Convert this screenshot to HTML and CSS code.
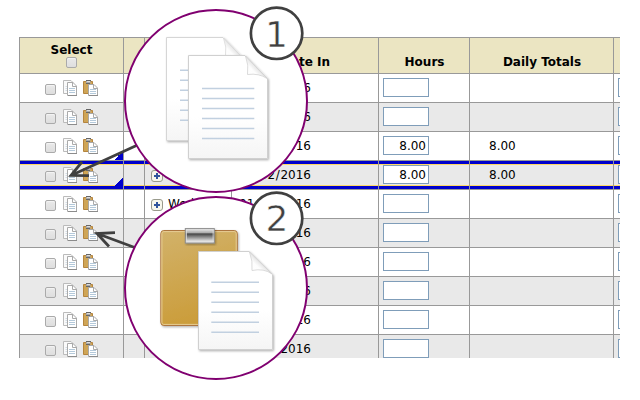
FILE: index.html
```html
<!DOCTYPE html>
<html lang="en">
<head>
<meta charset="utf-8">
<title>Timesheet</title>
<link rel="stylesheet" href="styles.css">
</head>
<body>
<svg class="defs" width="0" height="0">
  <defs>
    <linearGradient id="paper" x1="0" y1="0" x2="0" y2="1"><stop offset="0" stop-color="#fff"/><stop offset=".6" stop-color="#fff"/><stop offset="1" stop-color="#f5f5f5"/></linearGradient>
    <linearGradient id="board" x1="0" y1="0" x2=".25" y2="1"><stop offset="0" stop-color="#d2b26a"/><stop offset="1" stop-color="#cb9d3b"/></linearGradient>
    <linearGradient id="clip" x1="0" y1="0" x2="0" y2="1"><stop offset="0" stop-color="#eee"/><stop offset=".3" stop-color="#a8a8a8"/><stop offset=".36" stop-color="#444"/><stop offset=".9" stop-color="#eee"/><stop offset="1" stop-color="#bbb"/></linearGradient>
    <linearGradient id="fold" x1="0" y1="1" x2="1" y2="0"><stop offset="0" stop-color="#fff"/><stop offset=".35" stop-color="#fdfdfd"/><stop offset=".5" stop-color="#e6e6e6"/></linearGradient>
    <filter id="shadow" x="-10%" y="-10%" width="125%" height="125%"><feDropShadow dx="1" dy="1.2" stdDeviation="1.1" flood-color="#000" flood-opacity=".3"/></filter>
  </defs>
  <symbol id="copy" viewBox="0 0 15 17">
    <path d="M.5.5H8L10.500 3V13.500H.5Z" fill="#fafafa" stroke="#bbb"/>
    <path d="M2.500 6.500H5M2.500 8.500H5M2.500 10.500H5" stroke="#d3dde6"/>
    <path d="M4.500 2.500H10L13.500 6V15.500H4.500Z" fill="#fff" stroke="#aaa"/>
    <path d="M9.500 2.500V6.500H13.500" fill="none" stroke="#aaa"/>
    <path d="M5 15.500H14" stroke="#8c8c8c"/>
    <path d="M6 8.500H12M6 10.500H12M6 12.500H12" stroke="#b4c9da"/>
  </symbol>
  <symbol id="paste" viewBox="0 0 16 17">
    <path d="M.5 1.500H9.500V13.500H.5Z" fill="#cfa556" stroke="#b5853e"/>
    <path d="M3 .5H7.500V3.500H3Z" fill="#aaa"/>
    <path d="M3 .5H8M3 3.500H7" stroke="#666"/>
    <path d="M4 1.500H7" stroke="#ddd"/>
    <path d="M5.500 4.500H11L14.500 8V15.500H5.500Z" fill="#fff" stroke="#a8a8a8"/>
    <path d="M10.500 4.500V8.500H14.500" fill="none" stroke="#aaa"/>
    <path d="M6 15.500H15" stroke="#8c8c8c"/>
    <path d="M7 9.500H13M7 11.500H13M7 13.500H13" stroke="#b4c9da"/>
  </symbol>
</svg>

<div class="sheet">
  <div class="row head">
    <div class="cell select"><span>Select</span><i class="check"></i></div><div class="cell"></div><div class="cell"></div><div class="cell">Date In</div><div class="cell">Hours</div><div class="cell">Daily Totals</div><div class="cell"></div>
  </div>
  <div class="row">
    <div class="cell tools"><i class="check"></i><svg class="copy"><use href="#copy"/></svg><svg class="paste"><use href="#paste"/></svg></div><div class="cell"></div><div class="cell day"></div><div class="cell date">12/30<b>/</b>2016</div><div class="cell entry"><span class="field"></span></div><div class="cell total"></div><div class="cell entry"><span class="field"></span></div>
  </div>
  <div class="row alt">
    <div class="cell tools"><i class="check"></i><svg class="copy"><use href="#copy"/></svg><svg class="paste"><use href="#paste"/></svg></div><div class="cell"></div><div class="cell day"></div><div class="cell date">12/31<b>/</b>2016</div><div class="cell entry"><span class="field"></span></div><div class="cell total"></div><div class="cell entry"><span class="field"></span></div>
  </div>
  <div class="row">
    <div class="cell tools noted"><i class="check"></i><svg class="copy"><use href="#copy"/></svg><svg class="paste"><use href="#paste"/></svg></div><div class="cell"></div><div class="cell day"></div><div class="cell date">01<b>/</b>01<b>/</b>2016</div><div class="cell entry"><span class="field">8.00</span></div><div class="cell total">8.00</div><div class="cell entry"><span class="field"></span></div>
  </div>
  <div class="row alt current">
    <div class="cell tools noted"><i class="check"></i><svg class="copy"><use href="#copy"/></svg><svg class="paste"><use href="#paste"/></svg></div><div class="cell"></div><div class="cell day"><i class="plus"></i></div><div class="cell date">01<b>/</b>02<b>/</b>2016</div><div class="cell entry"><span class="field">8.00</span></div><div class="cell total">8.00</div><div class="cell entry"><span class="field"></span></div>
  </div>
  <div class="row">
    <div class="cell tools"><i class="check"></i><svg class="copy"><use href="#copy"/></svg><svg class="paste"><use href="#paste"/></svg></div><div class="cell"></div><div class="cell day"><i class="plus"></i>Wed</div><div class="cell date">01<b>/</b>03<b>/</b>2016</div><div class="cell entry"><span class="field"></span></div><div class="cell total"></div><div class="cell entry"><span class="field"></span></div>
  </div>
  <div class="row alt">
    <div class="cell tools"><i class="check"></i><svg class="copy"><use href="#copy"/></svg><svg class="paste"><use href="#paste"/></svg></div><div class="cell"></div><div class="cell day"></div><div class="cell date">01<b>/</b>04<b>/</b>2016</div><div class="cell entry"><span class="field"></span></div><div class="cell total"></div><div class="cell entry"><span class="field"></span></div>
  </div>
  <div class="row">
    <div class="cell tools"><i class="check"></i><svg class="copy"><use href="#copy"/></svg><svg class="paste"><use href="#paste"/></svg></div><div class="cell"></div><div class="cell day"></div><div class="cell date">01<b>/</b>05<b>/</b>2016</div><div class="cell entry"><span class="field"></span></div><div class="cell total"></div><div class="cell entry"><span class="field"></span></div>
  </div>
  <div class="row alt">
    <div class="cell tools"><i class="check"></i><svg class="copy"><use href="#copy"/></svg><svg class="paste"><use href="#paste"/></svg></div><div class="cell"></div><div class="cell day"></div><div class="cell date">01<b>/</b>06<b>/</b>2016</div><div class="cell entry"><span class="field"></span></div><div class="cell total"></div><div class="cell entry"><span class="field"></span></div>
  </div>
  <div class="row">
    <div class="cell tools"><i class="check"></i><svg class="copy"><use href="#copy"/></svg><svg class="paste"><use href="#paste"/></svg></div><div class="cell"></div><div class="cell day"></div><div class="cell date">01<b>/</b>07<b>/</b>2016</div><div class="cell entry"><span class="field"></span></div><div class="cell total"></div><div class="cell entry"><span class="field"></span></div>
  </div>
  <div class="row alt">
    <div class="cell tools"><i class="check"></i><svg class="copy"><use href="#copy"/></svg><svg class="paste"><use href="#paste"/></svg></div><div class="cell"></div><div class="cell day"></div><div class="cell date">01<b>/</b>08<b>/</b>2016</div><div class="cell entry"><span class="field"></span></div><div class="cell total"></div><div class="cell entry"><span class="field"></span></div>
  </div>
</div>

<svg class="callouts" width="640" height="400" viewBox="0 0 640 400">
  <g fill="none" stroke="#404040" stroke-width="2.8">
    <path d="M137 145.300L71 175.500M82 161.800L71 175.500L89 175.700"/>
    <path d="M136 248L97 233.500M115 232.600L97 233.500L109 246.500"/>
  </g>
  <g fill="#fff" stroke="#800070" stroke-width="2">
    <circle cx="216" cy="101" r="91"/>
    <circle cx="216" cy="288" r="91"/>
  </g>

  <g filter="url(#shadow)"><path d="M166.500 37.500H223L245.500 60.500V140.500H166.500Z" fill="url(#paper)" stroke="#d6d6d6"/></g>
  <path d="M223.500 38Q227 47 225.500 56Q236 54 245 60.500Z" fill="url(#fold)" stroke="#d8d8d8" stroke-width=".8"/>
  <path d="M180 70.300H200M180 80.300H200M180 90.300H200M180 100.300H200M180 110.300H200M180 120.300H200" stroke="#c1d0e0" stroke-width="1.500"/>
  <g filter="url(#shadow)"><path d="M188.500 55.500H245L267.500 78.500V158.500H188.500Z" fill="url(#paper)" stroke="#d0d0d0"/></g>
  <path d="M245.500 56Q249 65 247.500 74.500Q259 73 267 78.500Z" fill="url(#fold)" stroke="#d2d2d2" stroke-width=".8"/>
  <path d="M202 88.400H254.300M202 98.400H254.300M202 108.400H254.300M202 118.400H254.300M202 128.400H254.300M202 138.400H254.300" stroke="#c1d0e0" stroke-width="1.500"/>

  <g filter="url(#shadow)"><rect x="160.800" y="230.500" width="76.500" height="95" rx="3" fill="url(#board)" stroke="#ad7640"/></g>
  <rect x="161.900" y="231.600" width="74.300" height="92.800" rx="2" fill="none" stroke="#e6cc94"/>
  <g filter="url(#shadow)"><rect x="185.300" y="228.600" width="29" height="14.500" fill="url(#clip)" stroke="#8c8c8c"/></g>
  <rect x="186.500" y="229.800" width="26.600" height="12" fill="none" stroke="#ddd" stroke-width=".8"/>
  <g filter="url(#shadow)"><path d="M198.500 251.500H249L272.500 274.500V349.500H198.500Z" fill="url(#paper)" stroke="#d0d0d0"/></g>
  <path d="M249.500 252Q253 261 252 270.500Q264 268 272 274Z" fill="url(#fold)" stroke="#d2d2d2" stroke-width=".8"/>
  <path d="M211.300 282.200H259M211.300 292.200H259M211.300 302.200H259M211.300 312.200H259M211.300 322.200H259M211.300 332.200H259" stroke="#c1d0e0" stroke-width="1.500"/>

  <g fill="#fff" stroke="#404040" stroke-width="2.700">
    <circle cx="276.600" cy="33.300" r="25.700"/>
    <circle cx="276.600" cy="218.300" r="25.700"/>
  </g>
  <g class="number">
    <text x="276.500" y="46.700">1</text>
    <text x="277" y="231.300">2</text>
  </g>
</svg>
</body>
</html>
```
FILE: styles.css
```css
body {
  margin: 0;
  width: 640px;
  height: 400px;
  overflow: hidden;
  background: #fff;
  color: #000;
  font: 12px/15px "DejaVu Sans", Verdana, sans-serif;
}
.defs { display: block; }
.sheet {
  width: 601px;
  height: 321px;
  margin: 37px 0 0 19px;
  overflow: hidden;
}
.row {
  display: grid;
  grid-template-columns: 104px 21px 87px 147px 91px 144px 7px;
  height: 29px;
}
.cell {
  box-sizing: border-box;
  border-left: 1px solid #999;
  border-top: 1px solid #999;
  overflow: hidden;
}
.alt { background: #e9e9e9; }
.head {
  height: 36px;
  background: #ebe5c2;
  font-weight: bold;
  text-align: center;
}
.head .cell { padding: 17px 0 0 1px; }
.head .select {
  display: flex;
  flex-direction: column;
  align-items: center;
  padding: 6px 0 0;
  line-height: 13px;
}
.check {
  flex: none;
  box-sizing: border-box;
  width: 11px;
  height: 11px;
  border: 1px solid #aaa;
  border-radius: 2px;
  background: linear-gradient(#e9e9e9, #dedede);
  box-shadow: inset 0 1px 1px #f4f4f4;
}
.tools {
  display: flex;
  align-items: flex-start;
  padding: 6px 0 0 25px;
}
.tools .check { margin-top: 4px; }
.copy { flex: none; width: 15px; height: 17px; margin-left: 7px; }
.paste { flex: none; width: 16px; height: 17px; margin-left: 5px; }
.noted { background: linear-gradient(135deg, transparent 50%, #00c 50%) right bottom / 10px 8px no-repeat; }
.day {
  display: flex;
  align-items: flex-start;
  padding: 7px 0 0 6px;
}
.plus {
  box-sizing: border-box;
  width: 12px;
  height: 12px;
  margin: 2px 5px 0 0;
  border: 1px solid #999a8c;
  border-radius: 3px;
  background:
    linear-gradient(#31559c, #31559c) center / 6px 2px no-repeat,
    linear-gradient(#31559c, #31559c) center / 2px 6px no-repeat,
    #f7f7ec;
}
.date { padding: 7px 67px 0 0; text-align: right; white-space: nowrap; }
.date b { font-weight: normal; padding: 0 .7px; }
.total { padding: 7px 0 0 19px; }
.entry { padding: 4px 0 0 4px; }
.field {
  display: block;
  box-sizing: border-box;
  width: 46px;
  height: 19px;
  padding: 2px 2px 0 0;
  border: 1px solid #7f9db9;
  background: #fff;
  text-align: right;
}
.current .cell {
  background-image:
    linear-gradient(#00c 3px, #ffd966 3px 4px, transparent 4px 24px, #ffd966 24px 25px, #00c 25px);
}
.current .noted {
  background:
    linear-gradient(135deg, transparent 50%, #00c 50%) right bottom 3px / 8px 8px no-repeat,
    linear-gradient(#00c 3px, #ffd966 3px 4px, transparent 4px 24px, #ffd966 24px 25px, #00c 25px);
}
.callouts { position: absolute; left: 0; top: 0; }
.number {
  font-size: 36px;
  text-anchor: middle;
  fill: #404040;
  stroke: #fff;
  stroke-width: .5px;
}
```
